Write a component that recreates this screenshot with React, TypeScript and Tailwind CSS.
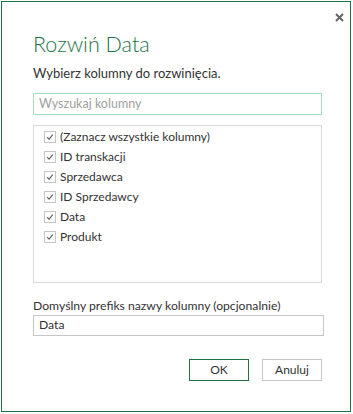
import React from "react";

const items = [
  "(Zaznacz wszystkie kolumny)",
  "ID transkacji",
  "Sprzedawca",
  "ID Sprzedawcy",
  "Data",
  "Produkt",
];

function Check() {
  return (
    <span className="w-[12px] h-[12px] border border-[#c4c4c4] bg-white flex items-center justify-center shrink-0">
      <svg width="8" height="8" viewBox="0 0 8 8">
        <path d="M1.2 4.3 L3.1 6.1 L6.8 1.6" fill="none" stroke="#666" strokeWidth="1.2" />
      </svg>
    </span>
  );
}

export default function App() {
  return (
    <div
      className="w-[353px] h-[414px] bg-white pl-[1px] pt-[1px]"
      style={{ fontFamily: 'Lato, "Open Sans", sans-serif' }}
    >
      <div className="w-[350px] h-[411px] border border-[#217346] bg-white relative flex flex-col px-[31px]">
        <svg className="absolute left-[333px] top-[11px]" width="9" height="9" viewBox="0 0 9 9">
          <path d="M1 1 L8 8 M8 1 L1 8" stroke="#666" strokeWidth="2" />
        </svg>
        <div className="mt-[29px] text-[21.5px] font-light text-[#217346] leading-[26px]">
          Rozwiń Data
        </div>
        <div className="mt-[7px] text-[13px] text-[#333] leading-[18px]">
          Wybierz kolumny do rozwinięcia.
        </div>
        <div className="mt-[11px] w-[289px] h-[22px] border border-[#a8dcc0] flex items-center px-[5px] text-[12.5px] text-[#a0a0a0]">
          Wyszukaj kolumny
        </div>
        <div className="mt-[10px] w-[289px] h-[158px] border border-[#dadada] pt-[1px] pl-[10px] flex flex-col">
          {items.map((t) => (
            <div key={t} className="h-[20px] flex items-center gap-[4px] text-[12px] text-[#333]">
              <Check />
              <span>{t}</span>
            </div>
          ))}
        </div>
        <div className="mt-[14px] text-[12.2px] text-[#333] leading-[17px]">
          Domyślny prefiks nazwy kolumny (opcjonalnie)
        </div>
        <div className="mt-[1px] w-[291px] h-[21px] border border-[#c6c6c6] flex items-center px-[5px] text-[12.2px] text-[#333]">
          Data
        </div>
        <div className="mt-[23px] flex justify-end gap-[13px] w-[289px]">
          <button className="w-[60px] h-[22px] border border-[#217346] text-[12px] text-[#333] bg-white">
            OK
          </button>
          <button className="w-[60px] h-[22px] border border-[#c6c6c6] text-[12px] text-[#333] bg-white">
            Anuluj
          </button>
        </div>
      </div>
    </div>
  );
}
